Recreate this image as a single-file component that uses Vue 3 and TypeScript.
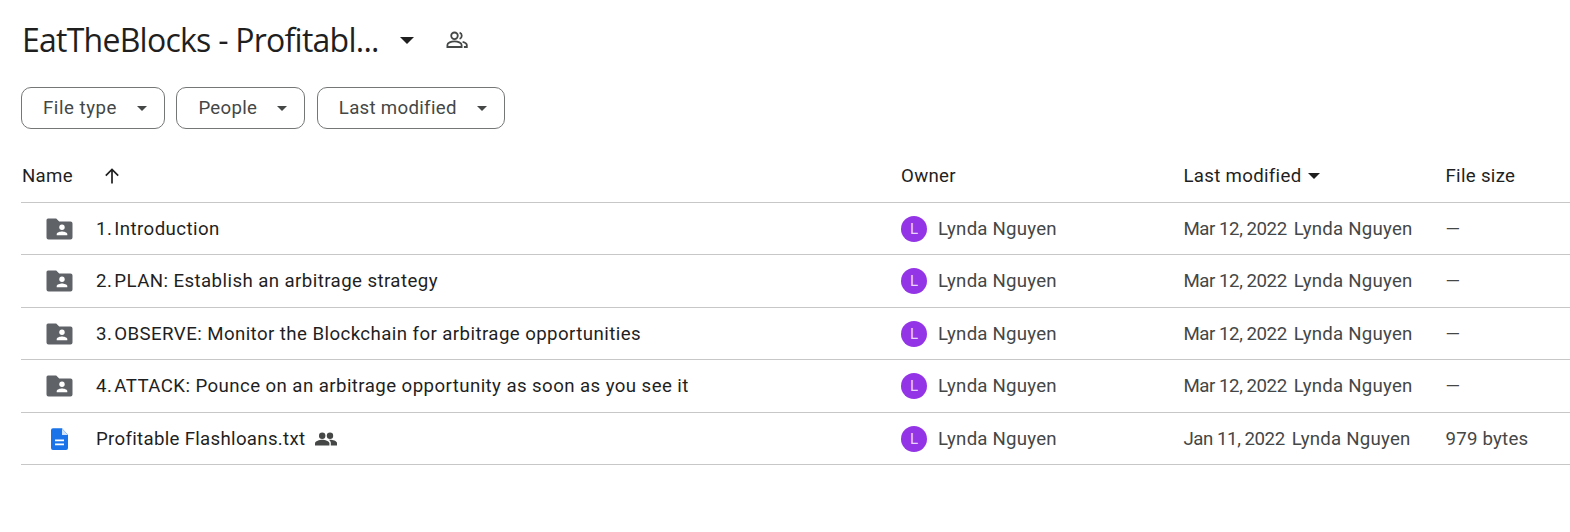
<script setup lang="ts">
interface Row {
  num?: string
  name: string
  kind: 'folder' | 'doc'
  date: string
  size: string
  shared?: boolean
}
const rows: Row[] = [
  { num: '1. ', name: 'Introduction', kind: 'folder', date: 'Mar 12, 2022', size: '—' },
  { num: '2. ', name: 'PLAN: Establish an arbitrage strategy', kind: 'folder', date: 'Mar 12, 2022', size: '—' },
  { num: '3. ', name: 'OBSERVE: Monitor the Blockchain for arbitrage opportunities', kind: 'folder', date: 'Mar 12, 2022', size: '—' },
  { num: '4. ', name: 'ATTACK: Pounce on an arbitrage opportunity as soon as you see it', kind: 'folder', date: 'Mar 12, 2022', size: '—' },
  { name: 'Profitable Flashloans.txt', kind: 'doc', date: 'Jan 11, 2022', size: '979 bytes', shared: true },
]
const chips = ['File type', 'People', 'Last modified']
</script>

<template>
  <div class="page">
    <div class="title-row">
      <h1 class="title">EatTheBlocks - Profitabl...</h1>
      <svg class="title-caret" width="14" height="7" viewBox="0 0 14 7"><path d="M0 0h14L7 7z" fill="#1f1f1f" /></svg>
      <svg class="title-people" width="24" height="24" viewBox="0 0 24 24" fill="none" stroke="#444746" stroke-width="1.8">
        <circle cx="9.500" cy="7.800" r="3.300" />
        <path d="M2.400 19v-2c0-2.200 3.700-3.600 7.100-3.600s7.100 1.400 7.100 3.600v2z" />
        <path d="M14.600 4.700a3.300 3.300 0 0 1 0 6.200M17.600 13.800c2.500.6 4.200 1.700 4.200 3.300V19h-2.900" />
      </svg>
    </div>

    <div class="chips">
      <button v-for="c in chips" :key="c" class="chip">
        <span>{{ c }}</span>
        <svg width="10" height="5" viewBox="0 0 10 5"><path d="M0 0h10L5 5z" fill="#444746" /></svg>
      </button>
    </div>

    <div class="grid head">
      <div class="cell name-head">
        <span>Name</span>
        <svg class="arrow" width="16" height="16" viewBox="0 0 16 16"><path d="M8 15.500V1.500M1.800 7.600 8 1.400l6.200 6.200" fill="none" stroke="#1f1f1f" stroke-width="1.700" /></svg>
      </div>
      <div class="cell">Owner</div>
      <div class="cell modified">
        <span>Last modified</span>
        <svg width="12" height="6" viewBox="0 0 12 6"><path d="M0 0h12L6 6z" fill="#1f1f1f" /></svg>
      </div>
      <div class="cell">File size</div>
    </div>

    <div v-for="r in rows" :key="r.name" class="grid row">
      <div class="cell name-cell">
        <span class="icon-box">
          <svg v-if="r.kind === 'folder'" width="27" height="22" viewBox="0 0 27 22">
            <path d="M2 .5h8.200l3 3H24.500a2 2 0 0 1 2 2V19.500a2 2 0 0 1-2 2H2.500a2 2 0 0 1-2-2V2a1.500 1.500 0 0 1 1.500-1.500z" fill="#5f6368" />
            <circle cx="16" cy="9.300" r="2.700" fill="#fff" />
            <path d="M10.700 17.300v-1.200c0-1.700 3.500-2.600 5.300-2.600s5.300.9 5.300 2.600v1.200z" fill="#fff" />
          </svg>
          <svg v-else class="doc" width="17" height="22" viewBox="0 0 17 22">
            <path d="M2 .3h9l6 6.700v13a2 2 0 0 1-2 2H2a2 2 0 0 1-2-2V2.300a2 2 0 0 1 2-2z" fill="#1a73e8" />
            <path d="M11 .6V7h5.800z" fill="#d2e3fc" />
            <path d="M4 11.500h9v1.800H4zM4 15.500h9v1.800H4z" fill="#fff" />
          </svg>
        </span>
        <span class="name" :class="{ numbered: r.num }"><span v-if="r.num" class="num">{{ r.num }}</span>{{ r.name }}</span>
        <svg v-if="r.shared" class="shared" width="22" height="14" viewBox="0 0 22 14" fill="#444746">
          <circle cx="7.200" cy="3.800" r="3.200" />
          <circle cx="15" cy="3.800" r="3.200" />
          <path d="M0 13.500v-2.300c0-2.300 4.600-3.500 7.200-3.500s7.200 1.200 7.200 3.500v2.300z" />
          <path d="M15.800 13.500v-2.500c0-1.400-.8-2.400-1.900-3.200l1.100-.1c2.600 0 7 1.200 7 3.400v2.400z" />
        </svg>
      </div>
      <div class="cell owner">
        <span class="avatar">L</span>
        <span>Lynda Nguyen</span>
      </div>
      <div class="cell muted date">
        <span class="date-text">{{ r.date }}</span>
        <span>Lynda Nguyen</span>
      </div>
      <div class="cell muted">{{ r.size }}</div>
    </div>
  </div>
</template>

<style>
html, body { margin: 0; background: #fff; }
</style>

<style scoped>
.page {
  width: 1570px;
  height: 532px;
  overflow: hidden;
  box-sizing: border-box;
  padding-left: 21px;
  font-family: Roboto, "Liberation Sans", sans-serif;
  font-size: 18.670px;
  color: #1f1f1f;
  background: #fff;
}
.title-row {
  height: 80px;
  display: flex;
  align-items: center;
  padding-left: 1px;
}
.title {
  margin: 0;
  font-family: "Open Sans", Roboto, sans-serif;
  font-weight: 400;
  font-size: 32px;
  letter-spacing: -0.750px;
  line-height: 40px;
  color: #1f1f1f;
  white-space: nowrap;
}
.title-caret { margin-left: 21px; }
.title-people { margin-left: 31px; }
.chips {
  display: flex;
  gap: 11.500px;
  margin-top: 7px;
}
.chip {
  height: 42px;
  box-sizing: border-box;
  border: 1px solid #747775;
  border-radius: 10px;
  background: #fff;
  display: flex;
  align-items: center;
  gap: 20px;
  padding: 0 17px 0 21px;
  font-family: inherit;
  font-size: 18.670px;
  letter-spacing: 0.300px;
  color: #444746;
}
.chip:first-child { letter-spacing: 0.520px; }
.grid {
  display: grid;
  grid-template-columns: 880px 282.500px 262px 1fr;
  box-sizing: border-box;
  border-bottom: 1px solid #c7c7c7;
}
.head {
  height: 73.500px;
  padding-top: 21px;
  letter-spacing: 0.300px;
}
.row { height: 52.500px; padding-top: 1px; }
.cell {
  display: flex;
  align-items: center;
  min-width: 0;
  white-space: nowrap;
}
.name-head { padding-left: 1px; }
.arrow { margin-left: 31px; }
.modified { gap: 7px; }
.name-cell { padding-left: 24px; }
.icon-box {
  width: 28px;
  display: flex;
  align-items: center;
  justify-content: center;
  flex: none;
}
.doc { margin-left: 1px; }
.name { margin-left: 23px; letter-spacing: 0.300px; }
.numbered { letter-spacing: 0.420px; }
.num { margin-right: -3px; }
.shared { margin-left: 10px; }
.owner { color: #444746; gap: 11px; letter-spacing: 0.220px; }
.avatar {
  width: 26px;
  height: 26px;
  border-radius: 50%;
  background: #9334e6;
  color: #e9d5fb;
  font-size: 15px;
  letter-spacing: 0;
  display: flex;
  align-items: center;
  justify-content: center;
}
.muted { color: #444746; letter-spacing: 0.220px; }
.date { gap: 7px; }
.date-text { letter-spacing: -0.450px; }
</style>
